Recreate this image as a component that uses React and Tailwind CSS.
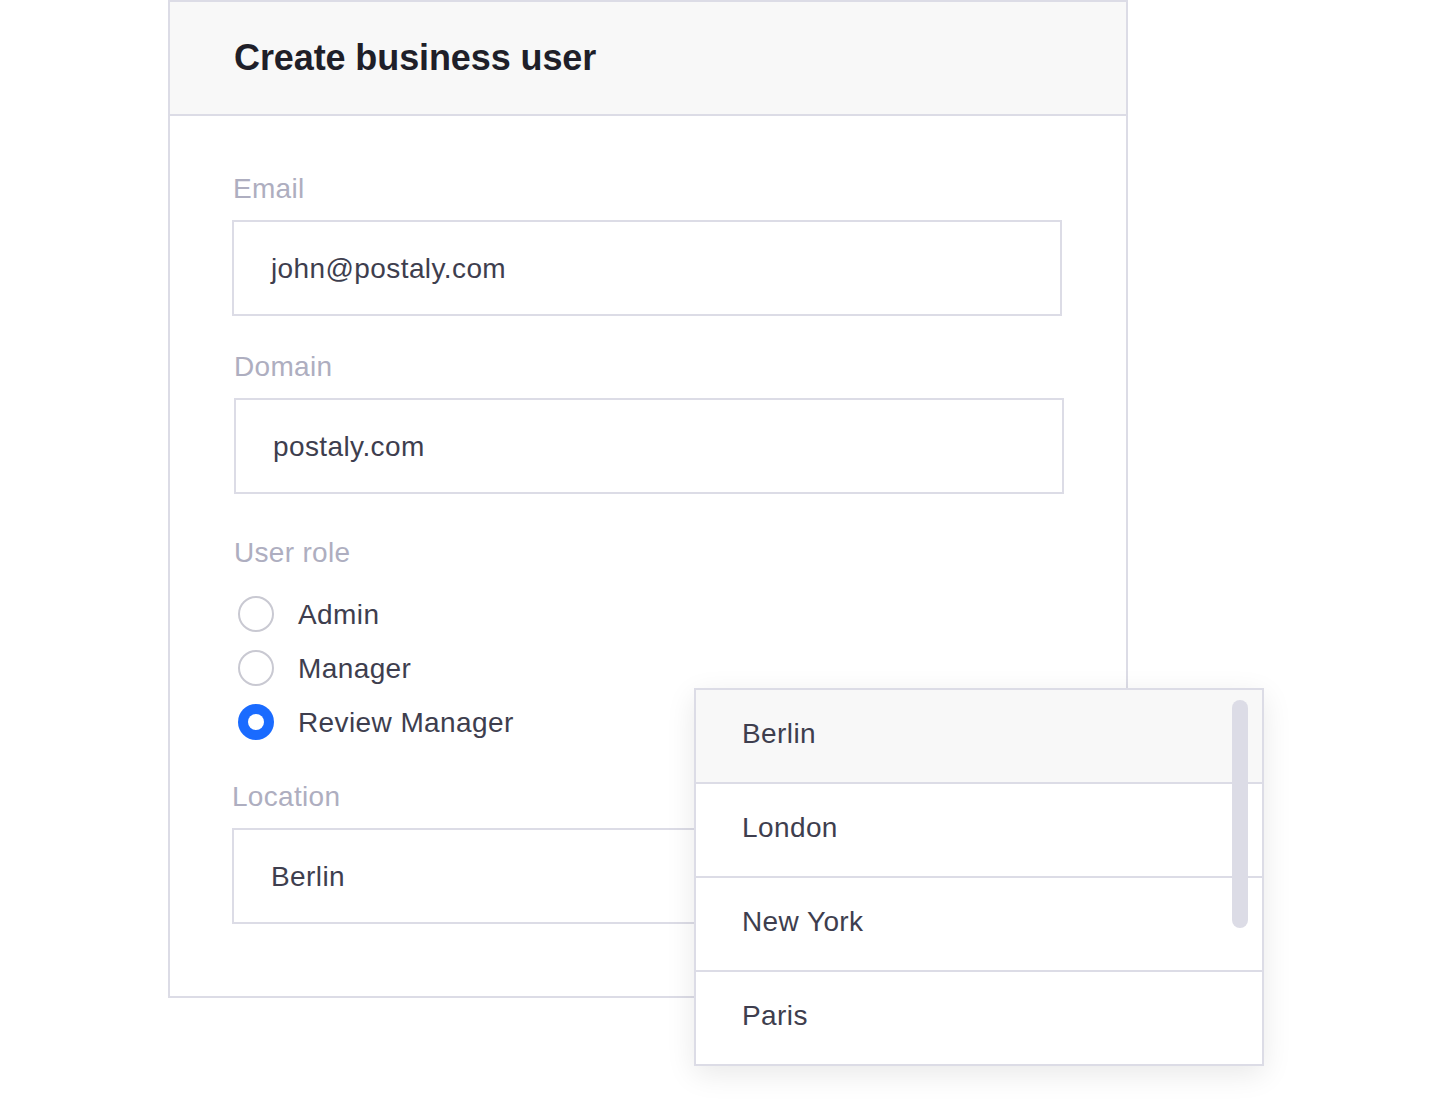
import React from "react";

const font = { fontFamily: '"Liberation Sans", Arial, sans-serif' };

function Label({ children, className = "" }) {
  return (
    <div className={"h-[32px] leading-[32px] text-[28px] tracking-[0.3px] text-[#aeaec0] " + className}>
      {children}
    </div>
  );
}

function Input({ value, className = "" }) {
  return (
    <div
      className={
        "h-[96px] w-[830px] border-2 border-[#dcdce6] bg-white flex items-center pl-[37px] pt-[2px] text-[28px] tracking-[0.4px] text-[#3e3e4e] " +
        className
      }
    >
      {value}
    </div>
  );
}

function Radio({ label, checked }) {
  return (
    <div className="h-[54px] flex items-center pl-[6px]">
      {checked ? (
        <div className="w-[36px] h-[36px] rounded-full bg-[#1a6bff] flex items-center justify-center">
          <div className="w-[16px] h-[16px] rounded-full bg-white" />
        </div>
      ) : (
        <div className="w-[36px] h-[36px] rounded-full border-2 border-[#c9c9d2] bg-white" />
      )}
      <span className="ml-[24px] pt-[2px] text-[28px] tracking-[0.4px] text-[#3e3e4e]">{label}</span>
    </div>
  );
}

export default function App() {
  const cities = ["Berlin", "London", "New York", "Paris"];
  return (
    <div className="relative w-[1430px] h-[1106px] bg-white overflow-hidden" style={font}>
      <div className="pl-[168px]">
        <div className="w-[960px] border-2 border-[#dcdce6] bg-white">
          <div className="h-[114px] bg-[#f8f8f8] border-b-2 border-[#dcdce6] flex items-center pl-[64px]">
            <h1 className="text-[36px] font-bold text-[#1f1f29] tracking-[-0.1px]">
              Create business user
            </h1>
          </div>
          <div className="pl-[62px] pt-[57px] pb-[72px]">
            <Label className="ml-[1px]">Email</Label>
            <Input value="john@postaly.com" className="mt-[15px]" />
            <Label className="mt-[35px] ml-[2px]">Domain</Label>
            <Input value="postaly.com" className="mt-[15px] ml-[2px]" />
            <Label className="mt-[43px] ml-[2px]">User role</Label>
            <div className="mt-[18px]">
              <Radio label="Admin" />
              <Radio label="Manager" />
              <Radio label="Review Manager" checked />
            </div>
            <Label className="mt-[32px]">Location</Label>
            <Input value="Berlin" className="mt-[15px]" />
          </div>
        </div>
      </div>

      <div className="absolute left-[694px] top-[688px] w-[570px] border-2 border-[#dcdce6] bg-white shadow-[0_8px_28px_rgba(0,0,0,0.09)]">
        {cities.map((c, i) => (
          <div
            key={c}
            className={
              "flex items-center pl-[46px] pb-[5px] text-[28px] tracking-[0.4px] text-[#3e3e4e] " +
              (i < cities.length - 1 ? "h-[94px] border-b-2 border-[#dcdce6] " : "h-[92px] ") +
              (i === 0 ? "bg-[#f8f8f8]" : "bg-white")
            }
          >
            {c}
          </div>
        ))}
        <div className="absolute left-[536px] top-[10px] w-[16px] h-[228px] rounded-full bg-[#dcdce6]" />
      </div>
    </div>
  );
}
